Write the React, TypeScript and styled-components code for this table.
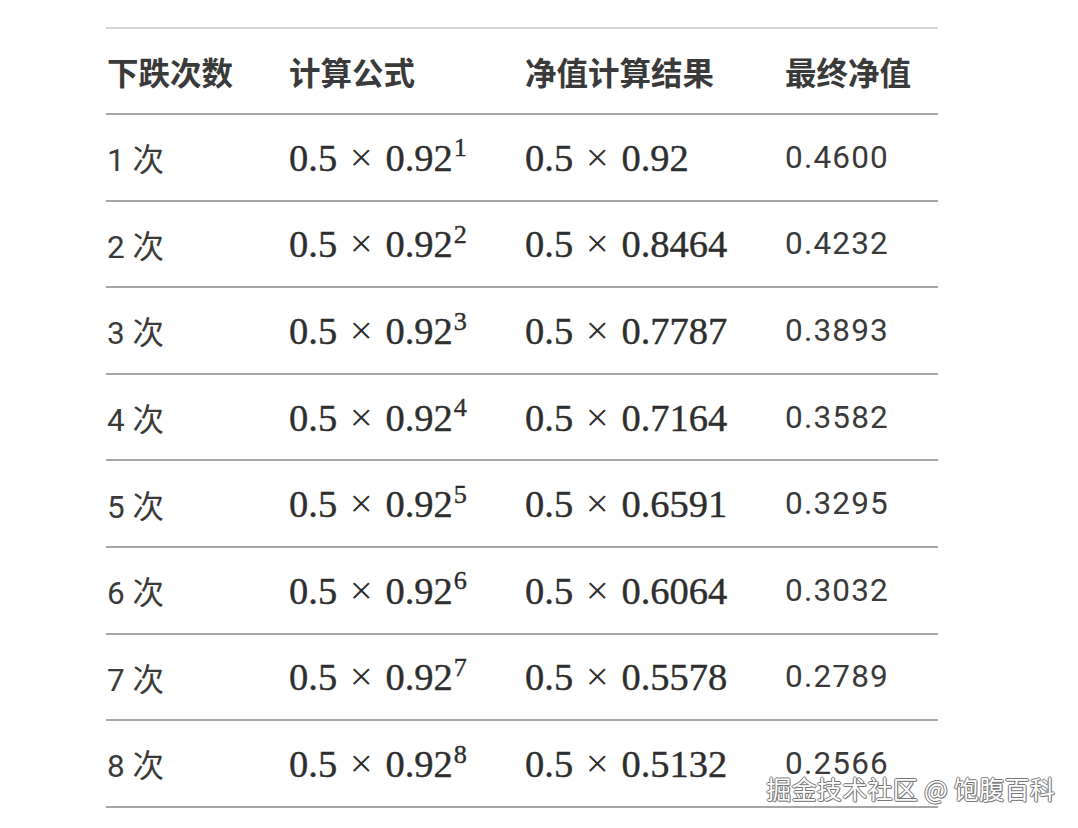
import React from "react";
import styled, { createGlobalStyle } from "styled-components";

interface Row {
  n: number;
  result: string;
  value: string;
}

const rows: Row[] = [
  { n: 1, result: "0.92", value: "0.4600" },
  { n: 2, result: "0.8464", value: "0.4232" },
  { n: 3, result: "0.7787", value: "0.3893" },
  { n: 4, result: "0.7164", value: "0.3582" },
  { n: 5, result: "0.6591", value: "0.3295" },
  { n: 6, result: "0.6064", value: "0.3032" },
  { n: 7, result: "0.5578", value: "0.2789" },
  { n: 8, result: "0.5132", value: "0.2566" },
];

const GlobalStyle = createGlobalStyle`
  html, body {
    margin: 0;
    padding: 0;
    background: #fff;
  }
  body {
    font-family: Roboto, "Noto Sans CJK SC", sans-serif;
    color: #333;
  }
`;

const Page = styled.div`
  position: relative;
  width: 1078px;
  height: 828px;
  overflow: hidden;
  padding: 27px 0 0 106px;
  box-sizing: border-box;
`;

const Table = styled.table`
  width: 832px;
  table-layout: fixed;
  border-collapse: collapse;
  font-size: 31.5px;
`;

const HeadRow = styled.tr`
  border-top: 2px solid #d4d4d4;
  border-bottom: 2px solid #a6a6a6;
`;

const BodyRow = styled.tr`
  border-bottom: 2px solid #a6a6a6;
`;

const Th = styled.th`
  height: 84px;
  padding: 0 0 0 1px;
  text-align: left;
  font-weight: 700;
  color: #3a3a3a;
  vertical-align: middle;
`;

const Td = styled.td<{ $numeric?: boolean }>`
  height: 84.6px;
  padding: 0 0 0 1px;
  text-align: left;
  vertical-align: middle;
  color: #3a3a3a;
  white-space: nowrap;
  letter-spacing: ${(p) => (p.$numeric ? "1.2px" : "0")};
`;

const Math = styled.span`
  font-family: "Liberation Serif", "DejaVu Serif", serif;
  font-size: 38.5px;
  color: #2e2e2e;
  -webkit-text-stroke: 0.4px #2e2e2e;
`;

const Op = styled.span`
  margin: 0 0.31em;
  font-size: 1.06em;
  -webkit-text-stroke: 0;
`;

const Sup = styled.sup`
  font-size: 0.68em;
  vertical-align: 0;
  position: relative;
  top: -0.55em;
  margin-left: 1px;
`;

const Watermark = styled.div`
  position: absolute;
  right: 23px;
  bottom: 22px;
  font-family: "Noto Sans CJK SC", sans-serif;
  font-size: 25px;
  font-weight: 400;
  color: #fff;
  letter-spacing: 0.3px;
  text-shadow:
    -1px 0 #777,
    1px 0 #777,
    0 -1px #777,
    0 1px #777,
    1px 1px #999;
`;

const Product: React.FC<{ base: string; exp?: number }> = ({ base, exp }) => (
  <Math>
    0.5<Op>×</Op>
    {base}
    {exp !== undefined && <Sup>{exp}</Sup>}
  </Math>
);

export default function App() {
  return (
    <>
      <GlobalStyle />
      <Page>
        <Table>
          <colgroup>
            <col style={{ width: 182 }} />
            <col style={{ width: 236 }} />
            <col style={{ width: 260 }} />
            <col style={{ width: 154 }} />
          </colgroup>
          <thead>
            <HeadRow>
              <Th>下跌次数</Th>
              <Th>计算公式</Th>
              <Th>净值计算结果</Th>
              <Th>最终净值</Th>
            </HeadRow>
          </thead>
          <tbody>
            {rows.map((r) => (
              <BodyRow key={r.n}>
                <Td>{r.n} 次</Td>
                <Td>
                  <Product base="0.92" exp={r.n} />
                </Td>
                <Td>
                  <Product base={r.result} />
                </Td>
                <Td $numeric>{r.value}</Td>
              </BodyRow>
            ))}
          </tbody>
        </Table>
        <Watermark>掘金技术社区 @ 饱腹百科</Watermark>
      </Page>
    </>
  );
}
